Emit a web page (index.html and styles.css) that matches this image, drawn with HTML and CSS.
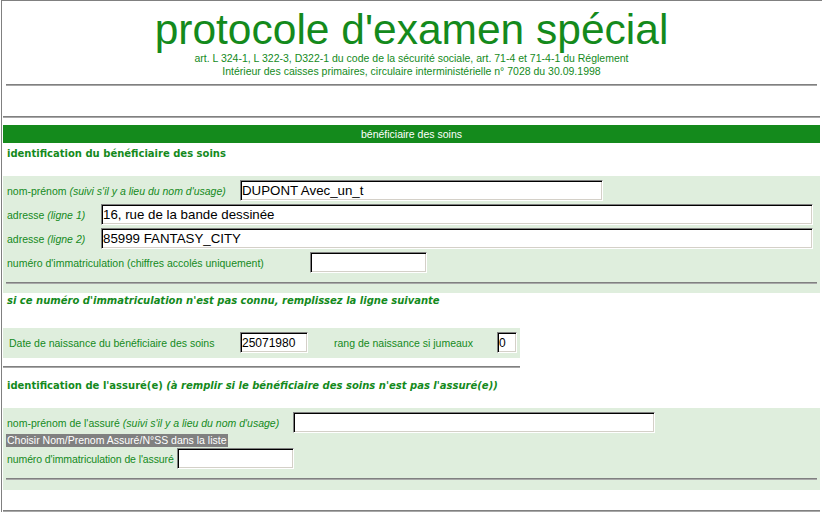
FILE: index.html
```html
<!DOCTYPE html>
<html lang="fr">
<head>
<meta charset="utf-8">
<title>protocole d'examen spécial</title>
<link rel="stylesheet" href="styles.css">
</head>
<body>
<div class="frame">
  <div class="page">
    <header class="head">
      <h1 class="title">protocole d'examen spécial</h1>
      <p class="refs">art. L 324-1, L 322-3, D322-1 du code de la sécurité sociale, art. 71-4 et 71-4-1 du Réglement<br>Intérieur des caisses primaires, circulaire interministérielle n° 7028 du 30.09.1998</p>
    </header>
    <hr class="rule rule-inset rule-head">
    <hr class="rule rule-gap">
    <div class="bar">bénéficiaire des soins</div>
    <h2 class="heading">identification du bénéficiaire des soins</h2>
    <section class="panel panel-a">
      <div class="row">
        <label class="lbl w-233">nom-prénom <em>(suivi s'il y a lieu du nom d'usage)</em></label>
        <input class="field w-363" type="text" value="DUPONT Avec_un_t">
      </div>
      <div class="row">
        <label class="lbl w-94">adresse <em>(ligne 1)</em></label>
        <input class="field w-712" type="text" value="16, rue de la bande dessinée">
      </div>
      <div class="row">
        <label class="lbl w-94">adresse <em>(ligne 2)</em></label>
        <input class="field w-712" type="text" value="85999 FANTASY_CITY">
      </div>
      <div class="row">
        <label class="lbl w-303">numéro d'immatriculation (chiffres accolés uniquement)</label>
        <input class="field w-117" type="text" value="">
      </div>
      <hr class="rule rule-inset rule-a">
    </section>
    <p class="note">si ce numéro d'immatriculation n'est pas connu, remplissez la ligne suivante</p>
    <section class="panel panel-b">
      <label class="lbl w-231">Date de naissance du bénéficiaire des soins</label>
      <input class="field small w-68" type="text" value="25071980">
      <label class="lbl lbl-rang">rang de naissance si jumeaux</label>
      <input class="field small w-20" type="text" value="0">
    </section>
    <hr class="rule rule-short">
    <h2 class="heading heading-b">identification de l'assuré(e) <em>(à remplir si le bénéficiaire des soins n'est pas l'assuré(e))</em></h2>
    <section class="panel panel-c">
      <div class="row row-c">
        <label class="lbl w-286">nom-prénom de l'assuré <em>(suivi s'il y a lieu du nom d'usage)</em></label>
        <input class="field w-362" type="text" value="">
      </div>
      <div class="pick"><span class="pick-opt">Choisir Nom/Prenom Assuré/N°SS dans la liste</span></div>
      <div class="row row-c">
        <label class="lbl lbl-tight w-170">numéro d'immatriculation de l'assuré</label>
        <input class="field w-117" type="text" value="">
      </div>
      <hr class="rule rule-inset rule-c">
    </section>
    <hr class="rule rule-end">
  </div>
</div>
</body>
</html>
```

FILE: styles.css
```css
html, body {
  margin: 0;
  padding: 0;
  overflow: hidden;
  background: #ffffff;
}

body {
  font-family: "Liberation Sans", Arial, sans-serif;
  font-size: 10.5px;
  color: #148a1c;
}

.frame {
  margin-left: 1px;
  width: 820px;
  border-left: 1px solid #808080;
  border-top: 1px solid #808080;
}

.page {
  margin: 0 2px 0 1px;
}

.head {
  padding-top: 7px;
  text-align: center;
}

.title {
  margin: 0;
  font-family: "Liberation Sans", Arial, sans-serif;
  font-size: 42.5px;
  font-weight: normal;
  line-height: 44px;
  color: #148a1c;
}

.refs {
  margin: 0;
  font-size: 10.5px;
  line-height: 13px;
}

.rule {
  display: block;
  margin: 0;
  height: 0;
  border: 0;
  border-top: 1px solid #808080;
  border-bottom: 1px solid #a8a8a8;
}

.rule-inset {
  margin-left: 3px;
  margin-right: 3px;
}

.rule-head {
  margin-top: 6px;
}

.rule-gap {
  margin-top: 30px;
}

.bar {
  margin-top: 7px;
  height: 18px;
  line-height: 18px;
  background: #148a1c;
  color: #ffffff;
  text-align: center;
  font-size: 10.5px;
}

.heading {
  margin: 0;
  height: 33px;
  box-sizing: border-box;
  padding: 4px 0 0 4px;
  font-family: "DejaVu Sans", Verdana, sans-serif;
  font-size: 10px;
  font-weight: bold;
  line-height: 14px;
  color: #148a1c;
}

.heading em,
.note {
  font-style: italic;
}

.panel {
  background: #dfeedd;
}

.panel-a {
  padding: 4px 0 9px;
}

.row {
  display: flex;
  align-items: baseline;
  height: 24px;
  padding-left: 4px;
}

.lbl {
  flex: none;
  white-space: nowrap;
  font-size: 10.5px;
  color: #148a1c;
}

.lbl-tight {
  letter-spacing: -0.1px;
}

.lbl em {
  font-style: italic;
}

.field {
  flex: none;
  box-sizing: border-box;
  height: 21px;
  margin: 0;
  padding: 0 1px;
  font-family: "Liberation Sans", Arial, sans-serif;
  font-size: 13.3px;
  color: #000000;
  background: #ffffff;
  border: 1px solid;
  border-color: #808080 #ffffff #ffffff #808080;
  box-shadow: inset 1px 1px 0 #000000, inset -1px -1px 0 #d4d0c8;
  border-radius: 0;
  outline: none;
}

.field.small {
  font-size: 12px;
}

.w-20 { width: 20px; }
.w-68 { width: 68px; }
.w-94 { width: 94px; }
.w-117 { width: 117px; }
.w-170 { width: 170px; }
.w-231 { width: 231px; }
.w-233 { width: 233px; }
.w-286 { width: 286px; }
.w-303 { width: 303px; }
.w-362 { width: 362px; }
.w-363 { width: 363px; }
.w-712 { width: 712px; }

.rule-a {
  margin-top: 6px;
}

.note {
  margin: 0;
  height: 35px;
  box-sizing: border-box;
  padding: 1px 0 0 4px;
  font-family: "DejaVu Sans", Verdana, sans-serif;
  font-size: 10px;
  font-weight: bold;
  line-height: 14px;
  color: #148a1c;
}

.panel-b {
  display: flex;
  align-items: baseline;
  width: 517px;
  box-sizing: border-box;
  padding: 4px 0 5px 6px;
}

.lbl-rang {
  margin-left: 26px;
  width: 163px;
}

.rule-short {
  width: 517px;
  margin-top: 8px;
}

.heading-b {
  height: 40px;
  padding-top: 11px;
}

.panel-c {
  padding: 4px 0 10px;
}

.row-c {
  height: 22px;
}

.row-c + .pick + .row-c {
  height: 21px;
}

.pick {
  padding-left: 3px;
  height: 14px;
}

.pick-opt {
  display: inline-block;
  padding: 0 1px;
  line-height: 13px;
  background: #808080;
  color: #ffffff;
  font-size: 10.5px;
}

.rule-c {
  margin-top: 9px;
}

.rule-end {
  margin-top: 20px;
}
```
